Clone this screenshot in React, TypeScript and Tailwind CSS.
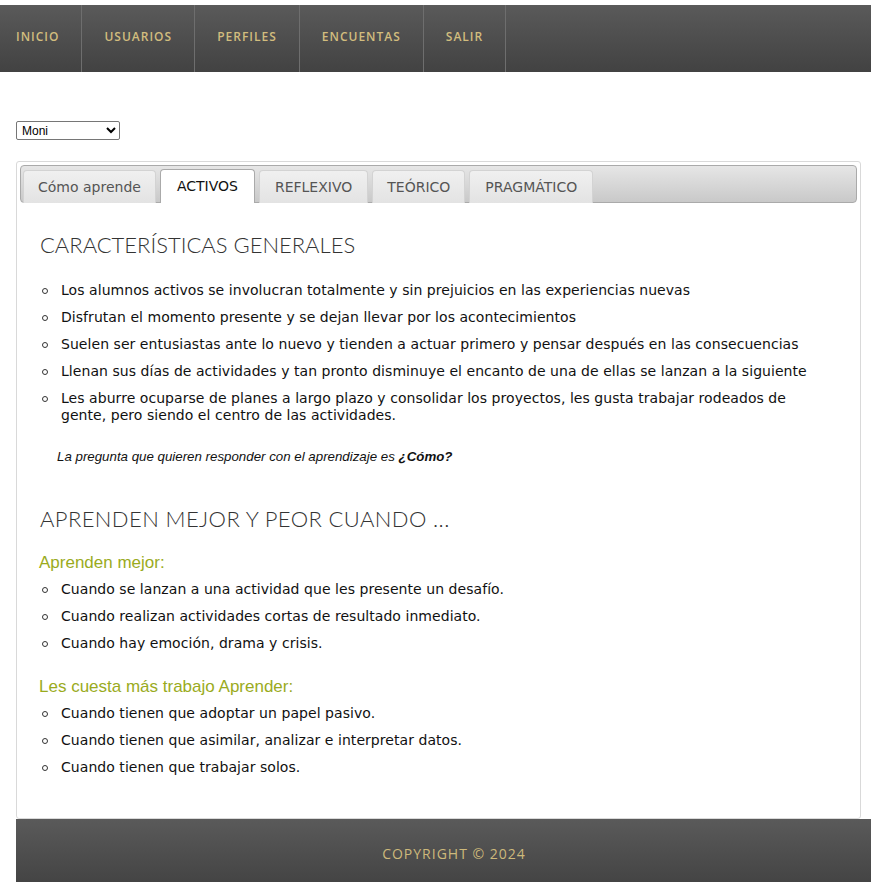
import { useState } from 'react';

const navItems = ['INICIO', 'USUARIOS', 'PERFILES', 'ENCUENTAS', 'SALIR'];
const tabs = ['Cómo aprende', 'ACTIVOS', 'REFLEXIVO', 'TEÓRICO', 'PRAGMÁTICO'];

const generales = [
    'Los alumnos activos se involucran totalmente y sin prejuicios en las experiencias nuevas',
    'Disfrutan el momento presente y se dejan llevar por los acontecimientos',
    'Suelen ser entusiastas ante lo nuevo y tienden a actuar primero y pensar después en las consecuencias',
    'Llenan sus días de actividades y tan pronto disminuye el encanto de una de ellas se lanzan a la siguiente',
    'Les aburre ocuparse de planes a largo plazo y consolidar los proyectos, les gusta trabajar rodeados de gente, pero siendo el centro de las actividades.',
];

const mejor = [
    'Cuando se lanzan a una actividad que les presente un desafío.',
    'Cuando realizan actividades cortas de resultado inmediato.',
    'Cuando hay emoción, drama y crisis.',
];

const peor = [
    'Cuando tienen que adoptar un papel pasivo.',
    'Cuando tienen que asimilar, analizar e interpretar datos.',
    'Cuando tienen que trabajar solos.',
];

function Bullets({ items }: { items: string[] }) {
    return (
        <ul className="flex flex-col gap-[10px] pl-[22px] pr-[40px]">
            {items.map((t) => (
                <li key={t} className="relative pl-[19px] text-[14px] leading-[17px] tracking-[0.05px] text-[#111]">
                    <span className="absolute left-0 top-[6px] w-[6px] h-[6px] rounded-full border border-[#333]" />
                    {t}
                </li>
            ))}
        </ul>
    );
}

export default function App() {
    const [active, setActive] = useState(1);

    return (
        <div className="min-h-screen bg-white pt-[5px]" style={{ fontFamily: '"DejaVu Sans", Verdana, sans-serif' }}>
            {/* Nav */}
            <nav className="h-[67px] bg-gradient-to-b from-[#5a5a5a] to-[#424242] flex">
                {navItems.map((n, i) => (
                    <a
                        key={n}
                        href="#"
                        className={
                            'h-full flex items-center pb-[3px] border-r border-[#6e6e6e] text-[12px] font-semibold tracking-[1px] text-[#d2bd7e] [font-family:"Open_Sans",sans-serif] ' +
                            (i === 0 ? 'pl-[16px] pr-[22px]' : 'px-[22px]')
                        }
                    >
                        {n}
                    </a>
                ))}
            </nav>

            {/* Selector */}
            <div className="mt-[49px] px-[16px] flex">
                <select className="w-[104px] h-[19px] border border-[#767676] rounded-[2px] text-[12px] leading-[16px] px-[1px] [font-family:'Liberation_Sans',Arial,sans-serif]">
                    <option>Moni</option>
                </select>
            </div>

            {/* Panel */}
            <div className="mt-[21px] ml-[16px] mr-[10px] border border-[#d9d9d9] rounded-[3px] p-[3px] pb-[42px]">
                <div className="h-[38px] rounded-[4px] border border-[#aaa] bg-gradient-to-b from-[#e6e6e6] to-[#c9c9c9] flex items-end gap-[4px] pl-[2px]">
                    {tabs.map((t, i) => (
                        <button
                            key={t}
                            onClick={() => setActive(i)}
                            className={
                                'h-[33px] rounded-t-[4px] border border-b-0 text-[14px] -mb-px ' +
                                (i === 0 || i === 3 ? 'px-[14px] ' : 'px-[15px] ') +
                                (i === active
                                    ? 'bg-white border-[#aaa] text-[#111] h-[34px] px-[16px]'
                                    : 'bg-gradient-to-b from-[#f0f0f0] to-[#e3e3e3] border-[#d3d3d3] text-[#555]')
                            }
                            style={{ fontFamily: 'Tahoma, "DejaVu Sans", sans-serif' }}
                        >
                            {t}
                        </button>
                    ))}
                </div>

                <div className="px-[20px] pt-[28px]">
                    <h2 className="text-[22px] leading-[28px] font-light text-[#333] [font-family:Lato,sans-serif]">
                        CARACTERÍSTICAS GENERALES
                    </h2>
                </div>
                <div className="mt-[23px]">
                    <Bullets items={generales} />
                </div>
                <p className="mt-[23px] pl-[37px] text-[13.3px] italic text-[#111] [font-family:'Liberation_Sans',Arial,sans-serif]">
                    La pregunta que quieren responder con el aprendizaje es <b>¿Cómo?</b>
                </p>

                <div className="px-[20px] mt-[38px]">
                    <h2 className="text-[22px] leading-[28px] font-light tracking-[0.4px] text-[#333] [font-family:Lato,sans-serif]">
                        APRENDEN MEJOR Y PEOR CUANDO ...
                    </h2>
                    <h3 className="mt-[20px] -ml-px text-[17px] leading-[20px] text-[#9aab1d] [font-family:'Liberation_Sans',Arial,sans-serif]">
                        Aprenden mejor:
                    </h3>
                </div>
                <div className="mt-[8px]">
                    <Bullets items={mejor} />
                </div>
                <div className="px-[20px] mt-[25px]">
                    <h3 className="-ml-px text-[17px] leading-[20px] text-[#9aab1d] [font-family:'Liberation_Sans',Arial,sans-serif]">
                        Les cuesta más trabajo Aprender:
                    </h3>
                </div>
                <div className="mt-[8px]">
                    <Bullets items={peor} />
                </div>
            </div>

            {/* Footer */}
            <footer className="ml-[16px] h-[70px] bg-gradient-to-b from-[#5a5a5a] to-[#424242] flex items-center justify-center pl-[21px]">
                <span className="text-[14px] tracking-[1px] text-[#cdb97b] [font-family:'Open_Sans',sans-serif]">
                    COPYRIGHT © 2024
                </span>
            </footer>
        </div>
    );
}
